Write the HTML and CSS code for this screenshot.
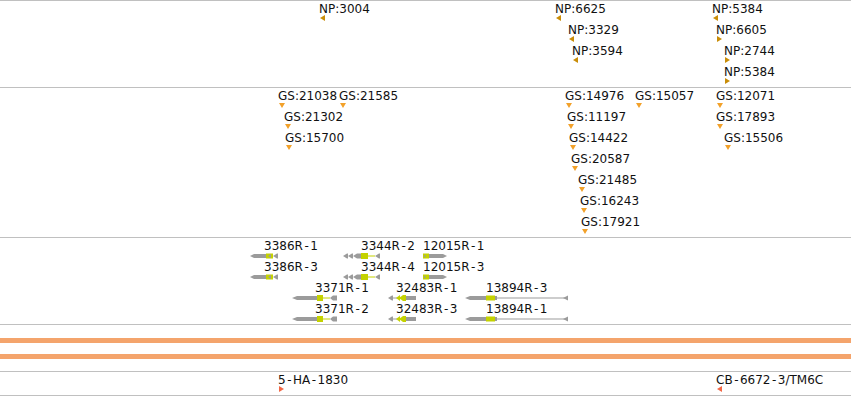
FILE: index.html
```html
<!DOCTYPE html>
<html lang="en">
<head>
<meta charset="utf-8">
<title>Tracks</title>
<link rel="stylesheet" href="styles.css">
</head>
<body>
<div class="browser">

  <!-- NP track -->
  <div class="track track-np">
    <div class="feat" style="left:320px;top:1px"><span class="label">NP:3004</span><svg class="tri np" width="5" height="6"><polygon points="0,3 5,0 5,6"/></svg></div>
    <div class="feat" style="left:556px;top:1px"><span class="label">NP:6625</span><svg class="tri np" width="5" height="6"><polygon points="0,3 5,0 5,6"/></svg></div>
    <div class="feat" style="left:569px;top:22px"><span class="label">NP:3329</span><svg class="tri np" width="5" height="6"><polygon points="0,3 5,0 5,6"/></svg></div>
    <div class="feat" style="left:573px;top:43px"><span class="label">NP:3594</span><svg class="tri np" width="5" height="6"><polygon points="0,3 5,0 5,6"/></svg></div>
    <div class="feat" style="left:713px;top:1px"><span class="label">NP:5384</span><svg class="tri np" width="5" height="6"><polygon points="0,3 5,0 5,6"/></svg></div>
    <div class="feat" style="left:717px;top:22px"><span class="label">NP:6605</span><svg class="tri np" width="5" height="6"><polygon points="0,0 5,3 0,6"/></svg></div>
    <div class="feat" style="left:725px;top:43px"><span class="label">NP:2744</span><svg class="tri np" width="5" height="6"><polygon points="0,0 5,3 0,6"/></svg></div>
    <div class="feat" style="left:725px;top:64px"><span class="label">NP:5384</span><svg class="tri np" width="5" height="6"><polygon points="0,0 5,3 0,6"/></svg></div>
  </div>

  <!-- GS track -->
  <div class="track track-gs">
    <div class="feat" style="left:279px;top:1px"><span class="label">GS:21038</span><svg class="tri gs" width="6" height="5"><polygon points="0,0 6,0 3,5"/></svg></div>
    <div class="feat" style="left:340px;top:1px"><span class="label">GS:21585</span><svg class="tri gs" width="6" height="5"><polygon points="0,0 6,0 3,5"/></svg></div>
    <div class="feat" style="left:285px;top:22px"><span class="label">GS:21302</span><svg class="tri gs" width="6" height="5"><polygon points="0,0 6,0 3,5"/></svg></div>
    <div class="feat" style="left:286px;top:43px"><span class="label">GS:15700</span><svg class="tri gs" width="6" height="5"><polygon points="0,0 6,0 3,5"/></svg></div>
    <div class="feat" style="left:566px;top:1px"><span class="label">GS:14976</span><svg class="tri gs" width="6" height="5"><polygon points="0,0 6,0 3,5"/></svg></div>
    <div class="feat" style="left:636px;top:1px"><span class="label">GS:15057</span><svg class="tri gs" width="6" height="5"><polygon points="0,0 6,0 3,5"/></svg></div>
    <div class="feat" style="left:568px;top:22px"><span class="label">GS:11197</span><svg class="tri gs" width="6" height="5"><polygon points="0,0 6,0 3,5"/></svg></div>
    <div class="feat" style="left:570px;top:43px"><span class="label">GS:14422</span><svg class="tri gs" width="6" height="5"><polygon points="0,0 6,0 3,5"/></svg></div>
    <div class="feat" style="left:572px;top:64px"><span class="label">GS:20587</span><svg class="tri gs" width="6" height="5"><polygon points="0,0 6,0 3,5"/></svg></div>
    <div class="feat" style="left:579px;top:85px"><span class="label">GS:21485</span><svg class="tri gs" width="6" height="5"><polygon points="0,0 6,0 3,5"/></svg></div>
    <div class="feat" style="left:581px;top:106px"><span class="label">GS:16243</span><svg class="tri gs" width="6" height="5"><polygon points="0,0 6,0 3,5"/></svg></div>
    <div class="feat" style="left:582px;top:127px"><span class="label">GS:17921</span><svg class="tri gs" width="6" height="5"><polygon points="0,0 6,0 3,5"/></svg></div>
    <div class="feat" style="left:717px;top:1px"><span class="label">GS:12071</span><svg class="tri gs" width="6" height="5"><polygon points="0,0 6,0 3,5"/></svg></div>
    <div class="feat" style="left:717px;top:22px"><span class="label">GS:17893</span><svg class="tri gs" width="6" height="5"><polygon points="0,0 6,0 3,5"/></svg></div>
    <div class="feat" style="left:725px;top:43px"><span class="label">GS:15506</span><svg class="tri gs" width="6" height="5"><polygon points="0,0 6,0 3,5"/></svg></div>
  </div>

  <!-- Gene models track -->
  <div class="track track-genes">
    <div class="feat" style="left:250px;top:1px"><span class="label" style="padding-left:15px">3386R<span class="hy">-</span>1</span>
      <svg class="gene" width="28" height="8"><polygon class="utr" points="0,4 4,2 16,2 16,6 4,6"/><rect class="cds" x="16" y="1.5" width="7" height="5"/><polygon class="utr" points="18,4 21,2 21,6"/><polygon class="utr" points="23,4 27,1.5 28,1.5 28,6.5 27,6.5"/></svg></div>
    <div class="feat" style="left:250px;top:22px"><span class="label" style="padding-left:15px">3386R<span class="hy">-</span>3</span>
      <svg class="gene" width="28" height="8"><polygon class="utr" points="0,4 4,2 16,2 16,6 4,6"/><rect class="cds" x="16" y="1.5" width="7" height="5"/><polygon class="utr" points="18,4 21,2 21,6"/><polygon class="utr" points="23,4 27,1.5 28,1.5 28,6.5 27,6.5"/></svg></div>

    <div class="feat" style="left:343px;top:1px"><span class="label" style="padding-left:19px">3344R<span class="hy">-</span>2</span>
      <svg class="gene" width="37" height="8"><polygon class="utr" points="0,4 4,1.5 5,1.5 5,6.5 4,6.5"/><polygon class="utr" points="5,4 9,1.5 10,1.5 10,6.5 9,6.5"/><polygon class="utr" points="10,4 14,1.5 18,1.5 18,6.5 14,6.5"/><rect class="cds" x="18" y="1" width="7" height="6"/><rect class="cds" x="25" y="3.5" width="7" height="1"/><polygon class="utr" points="32,4 36,1.5 37,1.5 37,6.5 36,6.5"/></svg></div>
    <div class="feat" style="left:343px;top:22px"><span class="label" style="padding-left:19px">3344R<span class="hy">-</span>4</span>
      <svg class="gene" width="37" height="8"><polygon class="utr" points="0,4 4,1.5 5,1.5 5,6.5 4,6.5"/><polygon class="utr" points="5,4 9,1.5 10,1.5 10,6.5 9,6.5"/><polygon class="utr" points="10,4 14,1.5 18,1.5 18,6.5 14,6.5"/><rect class="cds" x="18" y="1" width="7" height="6"/><rect class="cds" x="25" y="3.5" width="7" height="1"/><polygon class="utr" points="32,4 36,1.5 37,1.5 37,6.5 36,6.5"/></svg></div>

    <div class="feat" style="left:423px;top:1px"><span class="label" style="padding-left:1px">12015R<span class="hy">-</span>1</span>
      <svg class="gene" width="24" height="8"><rect class="cds" x="0" y="1.5" width="6" height="5"/><polygon class="utr" points="1,2.5 3,4 1,5.5"/><polygon class="utr" points="6,2 20,2 24,4 20,6 6,6"/></svg></div>
    <div class="feat" style="left:423px;top:22px"><span class="label" style="padding-left:1px">12015R<span class="hy">-</span>3</span>
      <svg class="gene" width="24" height="8"><rect class="cds" x="0" y="1.5" width="6" height="5"/><polygon class="utr" points="1,2.5 3,4 1,5.5"/><polygon class="utr" points="6,2 20,2 24,4 20,6 6,6"/></svg></div>

    <div class="feat" style="left:292px;top:43px"><span class="label" style="padding-left:24px">3371R<span class="hy">-</span>1</span>
      <svg class="gene" width="45" height="8"><polygon class="utr" points="0,4 5,2 25,2 25,6 5,6"/><rect class="cds" x="25" y="1" width="6" height="6"/><rect class="cds" x="31" y="3.5" width="7" height="1"/><polygon class="utr" points="38,4 41,1.5 45,1.5 45,6.5 41,6.5"/></svg></div>
    <div class="feat" style="left:292px;top:64px"><span class="label" style="padding-left:24px">3371R<span class="hy">-</span>2</span>
      <svg class="gene" width="45" height="8"><polygon class="utr" points="0,4 5,2 25,2 25,6 5,6"/><rect class="cds" x="25" y="1" width="6" height="6"/><rect class="cds" x="31" y="3.5" width="7" height="1"/><polygon class="utr" points="38,4 41,1.5 45,1.5 45,6.5 41,6.5"/></svg></div>

    <div class="feat" style="left:388px;top:43px"><span class="label" style="padding-left:9px">32483R<span class="hy">-</span>1</span>
      <svg class="gene" width="28" height="8"><polygon class="utr" points="0,4 4,1.5 5,1.5 5,6.5 4,6.5"/><rect class="utr" x="5" y="3.5" width="4" height="1"/><polygon class="cds" points="8,4 12,1 12,7"/><polygon class="cds" points="11,4 15,1 18,1 18,7 15,7"/><polygon class="utr" points="18,2 28,2 28,6 18,6"/></svg></div>
    <div class="feat" style="left:388px;top:64px"><span class="label" style="padding-left:9px">32483R<span class="hy">-</span>3</span>
      <svg class="gene" width="28" height="8"><polygon class="utr" points="0,4 4,1.5 5,1.5 5,6.5 4,6.5"/><rect class="utr" x="5" y="3.5" width="4" height="1"/><polygon class="cds" points="8,4 12,1 12,7"/><polygon class="cds" points="11,4 15,1 18,1 18,7 15,7"/><polygon class="utr" points="18,2 28,2 28,6 18,6"/></svg></div>

    <div class="feat" style="left:465px;top:43px"><span class="label" style="padding-left:22px">13894R<span class="hy">-</span>3</span>
      <svg class="gene" width="103" height="8"><polygon class="utr" points="0,4 5,2 21,2 21,6 5,6"/><rect class="cds" x="21" y="1.5" width="9" height="5"/><rect class="utr" x="30" y="2" width="2" height="4"/><rect class="utr" x="32" y="3.5" width="68" height="1"/><polygon class="utr" points="98,4 103,1.5 103,6.5"/></svg></div>
    <div class="feat" style="left:465px;top:64px"><span class="label" style="padding-left:22px">13894R<span class="hy">-</span>1</span>
      <svg class="gene" width="103" height="8"><polygon class="utr" points="0,4 5,2 21,2 21,6 5,6"/><rect class="cds" x="21" y="1.5" width="9" height="5"/><rect class="utr" x="30" y="2" width="2" height="4"/><rect class="utr" x="32" y="3.5" width="68" height="1"/><polygon class="utr" points="98,4 103,1.5 103,6.5"/></svg></div>
  </div>

  <!-- Coverage bars -->
  <div class="track track-bars">
    <div class="bar"></div>
    <div class="bar"></div>
  </div>

  <!-- Stocks track -->
  <div class="track track-stocks">
    <div class="feat" style="left:279px;top:1px"><span class="label">5<span class="hy">-</span>HA<span class="hy">-</span>1830</span><svg class="tri stock" width="5" height="6"><polygon points="0,0 5,3 0,6"/></svg></div>
    <div class="feat" style="left:717px;top:1px"><span class="label">CB<span class="hy">-</span>6672<span class="hy">-</span>3/TM6C</span><svg class="tri stock" width="5" height="6"><polygon points="0,3 5,0 5,6"/></svg></div>
  </div>

</div>
</body>
</html>
```

FILE: styles.css
```css
html, body {
  margin: 0;
  padding: 0;
  background: #ffffff;
}

.browser {
  width: 851px;
  border-bottom: 1px solid #c0c0c0;
  font-family: "DejaVu Sans", "Liberation Sans", sans-serif;
  font-size: 12px;
  color: #111111;
}

.track {
  position: relative;
  border-top: 1px solid #c0c0c0;
  overflow: hidden;
}

.track-np { height: 86px; }
.track-gs { height: 149px; }
.track-genes { height: 86px; }
.track-stocks { height: 23px; }

.track-bars {
  height: 47px;
  display: flex;
  flex-direction: column;
  gap: 11px;
  padding-top: 13px;
  box-sizing: border-box;
}

.bar {
  height: 5px;
  background: #f4a46c;
}

.feat {
  position: absolute;
  display: flex;
  flex-direction: column;
  align-items: flex-start;
}

.label {
  display: block;
  line-height: 14px;
  white-space: nowrap;
  margin-left: -1px;
}

.hy {
  padding: 0 1.5px;
}

.tri {
  display: block;
  margin-top: -1px;
}

.tri.np { fill: #c98d08; }
.tri.gs { fill: #f2a12a; margin-top: 0; }
.tri.stock { fill: #f26846; }

.gene {
  display: block;
  margin-top: -1px;
}

.gene .utr { fill: #9b9b9b; }
.gene .cds { fill: #c4d200; }
```
